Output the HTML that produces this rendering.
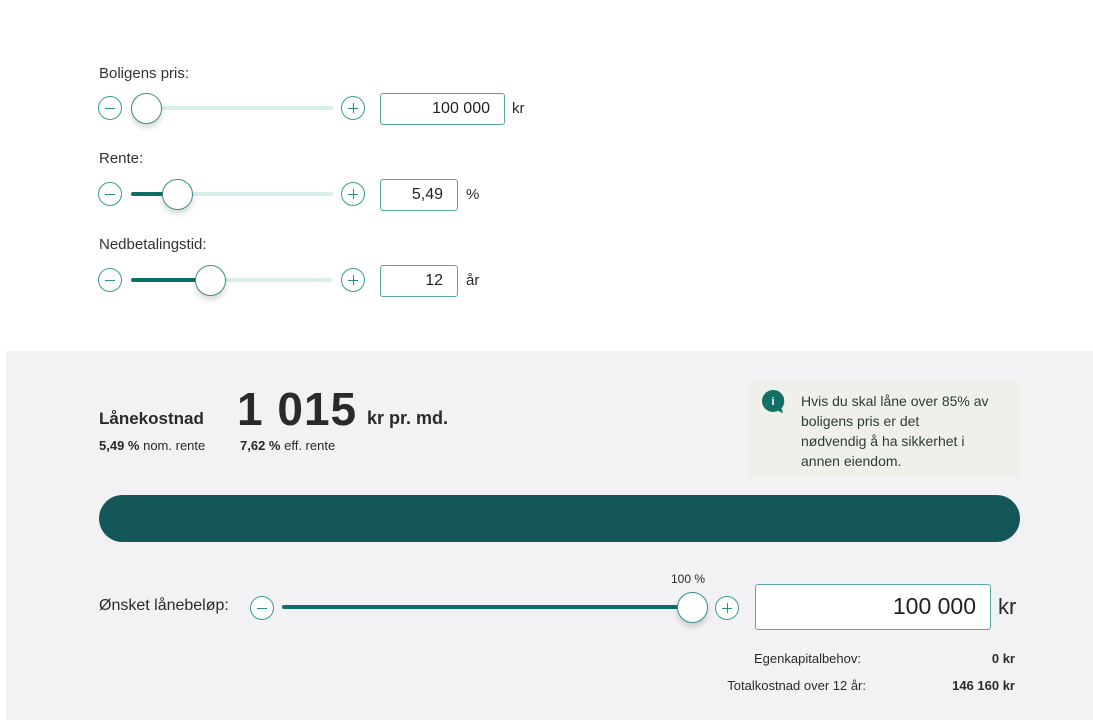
<!DOCTYPE html>
<html><head><style>
*{margin:0;padding:0;box-sizing:border-box}
body{width:1093px;height:720px;background:#fff;font-family:"Liberation Sans",sans-serif;color:#2a2a2a;position:relative;overflow:hidden}
.a{position:absolute}
.lbl{font-size:15px;color:#333}
.circ{position:absolute;width:24px;height:24px;border:1.3px solid #3a9a90;border-radius:50%;background:#fff}
.circ:before{content:"";position:absolute;left:6px;right:6px;top:10.5px;height:1.3px;background:#2b8f86}
.plus:after{content:"";position:absolute;top:6px;bottom:6px;left:10.5px;width:1.3px;background:#2b8f86}
.track{position:absolute;height:4px;background:#d6efea;border-radius:2px}
.fill{position:absolute;height:4px;background:#0e6e68;border-radius:2px}
.thumb{position:absolute;width:31px;height:31px;border-radius:50%;background:#fff;border:1.5px solid #3a8f88;box-shadow:0 4px 6px rgba(0,0,0,.15)}
.inp{position:absolute;border:1.5px solid #5aa8a0;border-radius:3px;background:#fff;text-align:right;font-size:16px;padding-right:14px;color:#222}
</style></head><body>
<div class="a lbl" style="left:99px;top:65px">Boligens pris:</div>
<div class="circ" style="left:98px;top:96px"></div>
<div class="track" style="left:131px;top:106px;width:202px"></div>
<div class="thumb" style="left:131px;top:93px"></div>
<div class="circ plus" style="left:341px;top:96px"></div>
<div class="inp" style="left:380px;top:93px;width:125px;height:32px;line-height:29px">100 000</div>
<div class="a" style="left:512px;top:100px;font-size:15px">kr</div>

<div class="a lbl" style="left:99px;top:150px">Rente:</div>
<div class="circ" style="left:98px;top:182px"></div>
<div class="track" style="left:131px;top:192px;width:202px"></div>
<div class="fill" style="left:131px;top:192px;width:40px"></div>
<div class="thumb" style="left:162px;top:179px"></div>
<div class="circ plus" style="left:341px;top:182px"></div>
<div class="inp" style="left:380px;top:179px;width:78px;height:32px;line-height:29px">5,49</div>
<div class="a" style="left:466px;top:186px;font-size:15px">%</div>

<div class="a lbl" style="left:99px;top:236px">Nedbetalingstid:</div>
<div class="circ" style="left:98px;top:268px"></div>
<div class="track" style="left:131px;top:278px;width:202px"></div>
<div class="fill" style="left:131px;top:278px;width:75px"></div>
<div class="thumb" style="left:195px;top:265px"></div>
<div class="circ plus" style="left:341px;top:268px"></div>
<div class="inp" style="left:380px;top:265px;width:78px;height:32px;line-height:29px">12</div>
<div class="a" style="left:466px;top:272px;font-size:15px">år</div>

<div class="a" style="left:6px;top:351px;width:1087px;height:369px;background:#f2f2f4"></div>
<div class="a" style="left:99px;top:409px;font-size:17px;font-weight:bold">Lånekostnad</div>
<div class="a" style="left:237px;top:382px;font-size:46px;font-weight:bold;letter-spacing:1px">1 015</div>
<div class="a" style="left:367px;top:408px;font-size:18px;font-weight:bold">kr pr. md.</div>
<div class="a" style="left:99px;top:438px;font-size:13px"><b>5,49 %</b> nom. rente</div>
<div class="a" style="left:240px;top:438px;font-size:13px"><b>7,62 %</b> eff. rente</div>
<div class="a" style="left:749px;top:381px;width:270px;height:97px;background:#eef0e9"></div>
<svg class="a" style="left:761px;top:389px" width="26" height="26" viewBox="0 0 26 26"><path d="M12 1a11 11 0 1 0 5 20.8l5 2.5-1.5-5A11 11 0 0 0 12 1z" fill="#137067"/><text x="12" y="16" font-size="11" fill="#fff" text-anchor="middle" font-family="Liberation Sans" font-weight="bold">i</text></svg>
<div class="a" style="left:801px;top:391px;font-size:14px;line-height:20px;color:#2f3b3a;white-space:nowrap">Hvis du skal låne over 85% av<br>boligens pris er det<br>nødvendig å ha sikkerhet i<br>annen eiendom.</div>
<div class="a" style="left:99px;top:495px;width:921px;height:47px;border-radius:24px;background:#155659"></div>
<div class="a" style="left:99px;top:597px;font-size:16px">Ønsket lånebeløp:</div>
<div class="circ" style="left:250px;top:596px"></div>
<div class="fill" style="left:282px;top:605px;width:410px;height:4px"></div>
<div class="a" style="left:671px;top:572px;font-size:12px">100 %</div>
<div class="thumb" style="left:677px;top:592px"></div>
<div class="circ plus" style="left:715px;top:596px"></div>
<div class="inp" style="left:755px;top:584px;width:236px;height:46px;line-height:43px;font-size:23px">100 000</div>
<div class="a" style="left:998px;top:594px;font-size:22px">kr</div>
<div class="a" style="left:600px;top:651px;width:261px;text-align:right;font-size:13px">Egenkapitalbehov:</div>
<div class="a" style="left:900px;top:651px;width:115px;text-align:right;font-size:13px;font-weight:bold">0 kr</div>
<div class="a" style="left:600px;top:678px;width:266px;text-align:right;font-size:13px">Totalkostnad over 12 år:</div>
<div class="a" style="left:900px;top:678px;width:115px;text-align:right;font-size:13px;font-weight:bold">146 160 kr</div>
</body></html>
